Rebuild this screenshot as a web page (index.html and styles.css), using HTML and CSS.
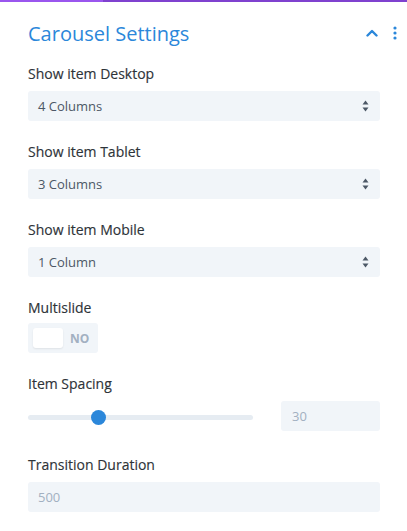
FILE: index.html
```html
<!DOCTYPE html>
<html>
<head>
<meta charset="utf-8">
<link rel="stylesheet" href="styles.css">
</head>
<body>
<div class="topbar"><div class="topbar-left"></div><div class="topbar-right"></div></div>
<div class="panel">
  <div class="header">
    <div class="title">Carousel Settings</div>
    <div class="header-icons">
      <svg class="chev" width="12" height="8" viewBox="0 0 12 8"><path d="M1.5 6.5 L6 2 L10.5 6.5" fill="none" stroke="#2b87da" stroke-width="2.4" stroke-linecap="round" stroke-linejoin="round"/></svg>
      <svg class="dots" width="4" height="14" viewBox="0 0 4 14"><circle cx="2" cy="2" r="1.6" fill="#2b87da"/><circle cx="2" cy="7" r="1.6" fill="#2b87da"/><circle cx="2" cy="12" r="1.6" fill="#2b87da"/></svg>
    </div>
  </div>

  <div class="field">
    <div class="label">Show item Desktop</div>
    <div class="select"><span>4 Columns</span><svg width="7" height="12" viewBox="0 0 7 12"><path d="M3.5 0.5 L6.5 4.5 L0.5 4.5 Z M3.5 11.5 L6.5 7.5 L0.5 7.5 Z" fill="#4c5866"/></svg></div>
  </div>
  <div class="field">
    <div class="label">Show item Tablet</div>
    <div class="select"><span>3 Columns</span><svg width="7" height="12" viewBox="0 0 7 12"><path d="M3.5 0.5 L6.5 4.5 L0.5 4.5 Z M3.5 11.5 L6.5 7.5 L0.5 7.5 Z" fill="#4c5866"/></svg></div>
  </div>
  <div class="field">
    <div class="label">Show item Mobile</div>
    <div class="select"><span>1 Column</span><svg width="7" height="12" viewBox="0 0 7 12"><path d="M3.5 0.5 L6.5 4.5 L0.5 4.5 Z M3.5 11.5 L6.5 7.5 L0.5 7.5 Z" fill="#4c5866"/></svg></div>
  </div>
  <div class="field">
    <div class="label label-tight">Multislide</div>
    <div class="toggle"><div class="knob"></div><span class="no">NO</span></div>
  </div>
  <div class="field field-range">
    <div class="label">Item Spacing</div>
    <div class="range-row">
      <div class="track"><div class="thumb"></div></div>
      <div class="num">30</div>
    </div>
  </div>
  <div class="field">
    <div class="label">Transition Duration</div>
    <div class="input">500</div>
  </div>
</div>
</body>
</html>
```

FILE: styles.css
```css
* { box-sizing: border-box; }
html, body { margin: 0; padding: 0; background: #ffffff; }
body { font-family: "Open Sans", "Noto Sans", sans-serif; color: #32373c; width: 407px; height: 531px; overflow: hidden; }
.topbar { display: flex; height: 2px; }
.topbar-left { width: 103px; background: #9a56ee; }
.topbar-right { flex: 1; background: #7f41cf; }
.panel { padding: 0 27px 0 28px; }
.header { display: flex; align-items: center; justify-content: space-between; height: 62px; }
.title { font-size: 20px; color: #2b87da; font-weight: 400; }
.header-icons { display: flex; align-items: center; gap: 15px; margin-right: -17px; }
.chev { display: block; }
.dots { display: block; }
.field { margin-bottom: 21px; }
.field-range { margin-bottom: 24px; }
.label { font-size: 14px; font-weight: 500; color: #2e3338; -webkit-text-stroke: 0.15px #2e3338; line-height: 20px; margin-bottom: 7px; }
.label-tight { margin-bottom: 5px; }
.select { height: 30px; background: #f1f5f9; border-radius: 3px; display: flex; align-items: center; justify-content: space-between; padding: 0 11px 0 10px; font-size: 13px; color: #4c5866; }
.select svg { display: block; }
.toggle { width: 70px; height: 30px; background: #f1f5f9; border-radius: 3px; display: flex; align-items: center; padding-left: 5px; gap: 7px; }
.knob { width: 30px; height: 20px; background: #ffffff; border-radius: 3px; box-shadow: 0 1px 2px rgba(0,0,0,0.08); }
.no { font-size: 12px; font-weight: 700; color: #a2b0c1; }
.range-row { display: flex; align-items: center; justify-content: space-between; }
.track { position: relative; width: 225px; height: 5px; background: #e6ecf2; border-radius: 3px; margin-top: 3px; }
.thumb { position: absolute; left: 63px; top: -5px; width: 15px; height: 15px; border-radius: 50%; background: #2b87da; }
.num { width: 99px; height: 30px; background: #f1f5f9; border-radius: 3px; font-size: 13px; color: #a2b0c1; display: flex; align-items: center; padding-left: 11px; }
.input { height: 30px; background: #f1f5f9; border-radius: 3px; font-size: 13px; color: #a2b0c1; display: flex; align-items: center; padding-left: 10px; }
```
